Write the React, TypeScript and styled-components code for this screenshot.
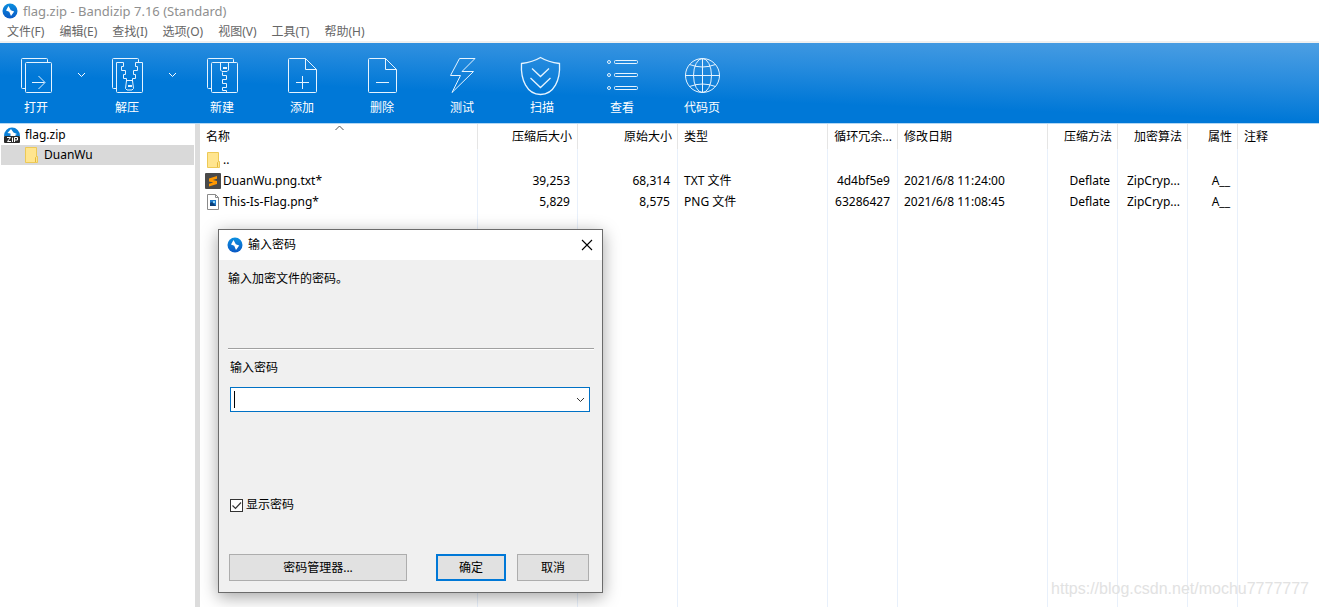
import React from "react";
import styled, { createGlobalStyle } from "styled-components";

const GlobalStyle = createGlobalStyle`
  *, *::before, *::after { box-sizing: border-box; }
  body {
    margin: 0;
    background: #fff;
    color: #000;
    font: 12px/16px "Noto Sans", "Noto Sans CJK SC", sans-serif;
  }
  button, input { font: inherit; color: inherit; }
`;

const Window = styled.div`
  position: relative;
  display: flex;
  flex-direction: column;
  height: 100vh;
  overflow: hidden;
`;

const TitleBar = styled.header`
  display: flex;
  align-items: center;
  gap: 5px;
  height: 22px;
  padding-left: 2px;
  color: #8f8f8f;
`;

const Title = styled.h1`
  margin: 0;
  font-size: 13px;
  font-weight: 400;
`;

const MenuBar = styled.nav`
  display: flex;
  gap: 15px;
  height: 21px;
  padding-left: 7px;
  border-bottom: 2px solid #f0f0f0;
`;

const MenuButton = styled.button`
  padding: 0;
  border: 0;
  background: none;
  color: #666;
  line-height: 20px;
  white-space: nowrap;
`;

const Toolbar = styled.div`
  display: flex;
  height: 81px;
  flex: none;
  border-bottom: 1px solid #b3d7f3;
  background: linear-gradient(182deg, #4d9fe3 0%, #288cde 32%, #0078d7 62%);
`;

const ToolButton = styled.button<{ $width: number }>`
  display: flex;
  flex-direction: column;
  align-items: center;
  gap: 4px;
  width: ${(p) => p.$width}px;
  padding: 13px 0 0;
  border: 0;
  background: none;
  color: #fff;
`;

const ToolIcon = styled.svg`
  width: 40px;
  height: 40px;
  overflow: visible;
  fill: none;
  stroke: #e6f4ff;
`;

const DropButton = styled.button`
  width: 19px;
  padding: 0 0 16px;
  border: 0;
  background: none;
  svg { display: block; margin: auto; }
`;

const Main = styled.main`
  display: flex;
  flex: 1;
  min-height: 0;
`;

const TreePane = styled.aside`
  width: 200px;
  flex: none;
  border-right: 5px solid #dcdcdc;
`;

const Tree = styled.ul`
  margin: 0;
  padding: 1px 1px 0;
  list-style: none;
`;

const TreeRow = styled.li<{ $depth: number; $selected?: boolean }>`
  display: flex;
  align-items: center;
  gap: 5px;
  height: 20px;
  padding-left: ${(p) => 3 + p.$depth * 19}px;
  background: ${(p) => (p.$selected ? "#d9d9d9" : "transparent")};
`;

const ListPane = styled.section`
  flex: 1;
  min-width: 0;
  overflow: hidden;
`;

const FileTable = styled.table`
  width: 100%;
  height: 100%;
  table-layout: fixed;
  border-collapse: separate;
  border-spacing: 0;
`;

const HeadCell = styled.th<{ $right?: boolean }>`
  position: relative;
  height: 25px;
  padding: 0 5px 0 6px;
  border-right: 1px solid #e5e5e5;
  font-weight: 400;
  text-align: ${(p) => (p.$right ? "right" : "left")};
  white-space: nowrap;
  &:last-child { border-right: 0; }
`;

const SortMark = styled.svg`
  position: absolute;
  top: 1px;
  left: 50%;
  margin-left: -4px;
`;

const Cell = styled.td<{ $right?: boolean }>`
  height: 21px;
  padding: 0 7px 0 6px;
  border-right: 1px solid #e8f0fb;
  text-align: ${(p) => (p.$right ? "right" : "left")};
  white-space: nowrap;
  &:last-child { border-right: 0; }
`;

const FillCell = styled(Cell)`
  height: auto;
`;

const FileName = styled.span`
  display: flex;
  align-items: center;
  gap: 2px;
  margin-left: -1px;
`;

const Dialog = styled.section`
  position: absolute;
  left: 218px;
  top: 229px;
  width: 385px;
  border: 1px solid #6b6b6b;
  background: #f0f0f0;
  box-shadow: 0 4px 16px rgba(0, 0, 0, 0.36);
`;

const DialogTitle = styled.header`
  display: flex;
  align-items: center;
  gap: 5px;
  height: 30px;
  padding: 0 9px 1px 8px;
  background: #fff;
`;

const DialogHeading = styled.h2`
  flex: 1;
  margin: 0;
  font-size: 12px;
  font-weight: 400;
`;

const CloseButton = styled.button`
  width: 12px;
  height: 12px;
  padding: 0;
  border: 0;
  background: none;
  svg { display: block; }
`;

const Message = styled.p`
  height: 78px;
  margin: 11px 8px 0 9px;
  border-bottom: 1px solid #a0a0a0;
  box-shadow: 0 1px 0 #fff;
`;

const Form = styled.form`
  display: flex;
  flex-direction: column;
  padding: 11px 12px 11px 11px;
`;

const ComboBox = styled.div`
  display: flex;
  align-items: center;
  height: 25px;
  margin: 11px 0 85px;
  padding: 0 4px 0 3px;
  border: 1px solid #0071c5;
  background: #fff;
`;

const Caret = styled.span`
  width: 1px;
  height: 17px;
  background: #000;
`;

const PasswordInput = styled.input`
  flex: 1;
  min-width: 0;
  padding: 0;
  border: 0;
  outline: 0;
  background: none;
`;

const ComboArrow = styled.button`
  padding: 0;
  border: 0;
  background: none;
  svg { display: block; }
`;

const CheckRow = styled.label`
  display: flex;
  align-items: center;
  gap: 3px;
`;

const CheckMark = styled.span`
  display: grid;
  input, svg { grid-area: 1 / 1; }
  svg { pointer-events: none; }
`;

const CheckInput = styled.input`
  appearance: none;
  width: 13px;
  height: 13px;
  margin: 0;
  border: 1px solid #333;
  background: #fff;
  &:not(:checked) + svg { visibility: hidden; }
`;

const ButtonRow = styled.div`
  display: flex;
  margin: 41px 1px 0 -1px;
`;

const DialogButton = styled.button<{ $width: number; $primary?: boolean }>`
  width: ${(p) => p.$width}px;
  height: 27px;
  padding: 0;
  border: ${(p) => (p.$primary ? "2px solid #0078d7" : "1px solid #adadad")};
  background: #e1e1e1;
  &:nth-child(2) { margin: 0 11px 0 auto; }
`;

const Watermark = styled.span`
  position: absolute;
  right: 10px;
  bottom: 9px;
  color: #e2e2e2;
  font: 16px/18px "Liberation Sans", sans-serif;
  pointer-events: none;
`;

const AppLogo = () => (
  <svg width="16" height="16" viewBox="0 0 16 16">
    <defs>
      <linearGradient id="logo" x1="0" y1="0" x2="0" y2="1">
        <stop offset="0" stopColor="#0b8fe0" />
        <stop offset="1" stopColor="#0a58c4" />
      </linearGradient>
    </defs>
    <circle cx="8" cy="8" r="7.5" fill="url(#logo)" />
    <path d="M6.500 3 4 7.500 7.200 8.800 9 13 12.200 8.600 8.800 7.200z" fill="#fff" />
  </svg>
);

const ZipIcon = () => (
  <svg width="16" height="16" viewBox="0 0 16 16">
    <path d="M0 9A8 8.500 0 0 1 16 9z" fill="#0a80d8" />
    <path d="M7 2 3.500 6 6.500 6.500 6.500 9H12L11 8 13 7 9.500 5.500z" fill="#fff" />
    <rect y="9" width="16" height="7" rx="1" fill="#2b2b2b" />
    <path d="M3 10.500H6.500L3.500 14.500H7M8.500 10.500V15M10.500 15V10.500H13.500V13H11" fill="none" stroke="#fff" />
  </svg>
);

const FolderIcon = () => (
  <svg width="16" height="16" viewBox="-1 0 16 16">
    <path d="M1.500.5h11v9h1v6h-12z" fill="#ffe58f" stroke="#edc956" />
    <path d="M11.500 15V10.500L12.500 9.500" fill="none" stroke="#e3b93e" />
  </svg>
);

const SublimeIcon = () => (
  <svg width="16" height="16" viewBox="0 0 16 16">
    <rect width="16" height="16" rx="1" fill="#4a4a4a" />
    <path d="M12 3 4 5.400v3l4.200 1.200L4 10.800V13.500l8-2.400v-3L7.800 6.900 12 5.700z" fill="#ff9800" />
  </svg>
);

const ImageIcon = () => (
  <svg width="16" height="16" viewBox="0 0 16 16">
    <path d="M2.500.5h8l3 3v12h-11z" fill="#fff" stroke="#8a8a8a" />
    <path d="M10.500.5v3h3" fill="none" stroke="#8a8a8a" />
    <rect x="5" y="6" width="6" height="6" fill="#1c78c9" />
    <path d="M5 12V9l2-1 4 4z" fill="#0b3f78" />
    <rect x="8" y="7" width="2" height="2" fill="#8fd6f5" />
  </svg>
);

const Chevron = ({ color }: { color: string }) => (
  <svg width="9" height="6" viewBox="0 0 9 6">
    <path d="M1 1l3.500 3.500L8 1" fill="none" stroke={color} />
  </svg>
);

const stackedSheet = "M9.500 32.500h-3q-1 0-1-1v-28q0-1 1-1h24q1 0 1 1v3";

const icons: Record<string, React.ReactNode> = {
  open: (
    <>
      <path d={stackedSheet} />
      <rect x="9.500" y="6.500" width="26" height="30" rx="1" />
      <path d="M16 26.500h12.500M22.500 20l6.500 6.500-6.500 6.500" />
    </>
  ),
  extract: (
    <>
      <path d={stackedSheet} />
      <path d="M16.500 6.500H9.500v29q0 1 1 1h24q1 0 1-1v-29H28.500v4h2v4h-4v4h2v4h-3v3M16.500 6.500v4h-2v4h4v4h-2v4h3v3" />
      <path d="M19.500 24.500h6l1 8-1.500 1.500h-5l-1.500-1.500z" />
      <rect x="21.500" y="29.500" width="3" height="1" />
    </>
  ),
  create: (
    <>
      <path d={stackedSheet} />
      <rect x="9.500" y="6.500" width="26" height="30" rx="1" />
      <path d="M18.500 6.500v7.500l1.500 1.500h5l1.500-1.500V6.500M20.500 16.500v3h4v4h-4v4h4v4h-4v3h4v2" />
      <rect x="21.500" y="11.500" width="3" height="1" />
    </>
  ),
  add: (
    <>
      <path d="M23.500 2.500h-16q-1 0-1 1v32q0 1 1 1h26q1 0 1-1v-22zv11h11" />
      <path d="M14 26.500h13M20.500 20v13" />
    </>
  ),
  remove: (
    <>
      <path d="M23.500 2.500h-16q-1 0-1 1v32q0 1 1 1h26q1 0 1-1v-22zv11h11" />
      <path d="M14 26.500h13" />
    </>
  ),
  test: <path d="M17.500 2.500H33L20 15.500h11.500L10 36.500l8.500-17h-10z" />,
  scan: (
    <g strokeWidth="1.300">
      <path d="M18.500 1.500Q26 6 37.500 7.500C38.500 24 32 38.500 18.500 38.500S-1.500 24-.5 7.500Q11 6 18.500 1.500z" />
      <path d="M10 12.500l8.500 8 8.500-8M8.500 22l10 9.500 10-9.500" />
    </g>
  ),
  view: (
    <>
      {[6, 19, 32].map((y) => (
        <g key={y}>
          <circle cx="7" cy={y} r="1.500" />
          <rect x="12.500" y={y - 1.5} width="23" height="3" rx="1" />
        </g>
      ))}
    </>
  ),
  codepage: (
    <>
      <circle cx="20.500" cy="19.500" r="17" />
      <ellipse cx="20.500" cy="19.500" rx="9" ry="17" />
      <path d="M20.500 2v35M3 19.500h35M7.500 8.500q13 5 26 0M7.500 30.500q13-5 26 0" />
    </>
  ),
};

const tools = [
  { icon: "open", label: "打开", width: 72, drop: true },
  { icon: "extract", label: "解压", width: 72, drop: true },
  { icon: "create", label: "新建", width: 80 },
  { icon: "add", label: "添加", width: 80 },
  { icon: "remove", label: "删除", width: 80 },
  { icon: "test", label: "测试", width: 80 },
  { icon: "scan", label: "扫描", width: 80 },
  { icon: "view", label: "查看", width: 80 },
  { icon: "codepage", label: "代码页", width: 80 },
];

const menus = ["文件(F)", "编辑(E)", "查找(I)", "选项(O)", "视图(V)", "工具(T)", "帮助(H)"];

const columns: { label: string; width?: number; right?: boolean }[] = [
  { label: "名称", width: 278 },
  { label: "压缩后大小", width: 100, right: true },
  { label: "原始大小", width: 100, right: true },
  { label: "类型", width: 150 },
  { label: "循环冗余...", width: 70, right: true },
  { label: "修改日期", width: 150 },
  { label: "压缩方法", width: 70, right: true },
  { label: "加密算法", width: 70, right: true },
  { label: "属性", width: 50, right: true },
  { label: "注释" },
];

const files = [
  { icon: <FolderIcon />, cells: ["..", "", "", "", "", "", "", "", "", ""] },
  {
    icon: <SublimeIcon />,
    cells: ["DuanWu.png.txt*", "39,253", "68,314", "TXT 文件", "4d4bf5e9", "2021/6/8 11:24:00", "Deflate", "ZipCryp...", "A__", ""],
  },
  {
    icon: <ImageIcon />,
    cells: ["This-Is-Flag.png*", "5,829", "8,575", "PNG 文件", "63286427", "2021/6/8 11:08:45", "Deflate", "ZipCryp...", "A__", ""],
  },
];

export default function App() {
  return (
    <Window>
      <GlobalStyle />
      <TitleBar>
        <AppLogo />
        <Title>flag.zip - Bandizip 7.16 (Standard)</Title>
      </TitleBar>
      <MenuBar>
        {menus.map((m) => (
          <MenuButton key={m} type="button">{m}</MenuButton>
        ))}
      </MenuBar>
      <Toolbar>
        {tools.map((t) => (
          <React.Fragment key={t.icon}>
            <ToolButton type="button" $width={t.width}>
              <ToolIcon viewBox="0 0 40 40">{icons[t.icon]}</ToolIcon>
              {t.label}
            </ToolButton>
            {t.drop && (
              <DropButton type="button" aria-label={t.label}>
                <Chevron color="#fff" />
              </DropButton>
            )}
          </React.Fragment>
        ))}
      </Toolbar>
      <Main>
        <TreePane>
          <Tree>
            <TreeRow $depth={0}><ZipIcon />flag.zip</TreeRow>
            <TreeRow $depth={1} $selected><FolderIcon />DuanWu</TreeRow>
          </Tree>
        </TreePane>
        <ListPane>
          <FileTable>
            <colgroup>
              {columns.map((c) => (
                <col key={c.label} width={c.width} />
              ))}
            </colgroup>
            <thead>
              <tr>
                {columns.map((c, i) => (
                  <HeadCell key={c.label} $right={c.right}>
                    {c.label}
                    {i === 0 && (
                      <SortMark width="9" height="6" viewBox="0 0 9 6">
                        <path d="M.5 5l4-4 4 4" fill="none" stroke="#555" />
                      </SortMark>
                    )}
                  </HeadCell>
                ))}
              </tr>
            </thead>
            <tbody>
              {files.map((f) => (
                <tr key={f.cells[0]}>
                  {f.cells.map((text, i) => (
                    <Cell key={columns[i].label} $right={columns[i].right}>
                      {i === 0 ? <FileName>{f.icon}{text}</FileName> : text}
                    </Cell>
                  ))}
                </tr>
              ))}
              <tr>
                {columns.map((c) => (
                  <FillCell key={c.label} />
                ))}
              </tr>
            </tbody>
          </FileTable>
        </ListPane>
      </Main>
      <Dialog role="dialog" aria-labelledby="dialog-title">
        <DialogTitle>
          <AppLogo />
          <DialogHeading id="dialog-title">输入密码</DialogHeading>
          <CloseButton type="button" aria-label="关闭">
            <svg width="12" height="12" viewBox="0 0 12 12">
              <path d="M1 1l10 10M11 1L1 11" stroke="#000" strokeWidth="1.100" />
            </svg>
          </CloseButton>
        </DialogTitle>
        <Message>输入加密文件的密码。</Message>
        <Form>
          <label htmlFor="password">输入密码</label>
          <ComboBox>
            <Caret />
            <PasswordInput id="password" type="text" autoComplete="off" />
            <ComboArrow type="button" aria-label="输入密码">
              <Chevron color="#333" />
            </ComboArrow>
          </ComboBox>
          <CheckRow>
            <CheckMark>
              <CheckInput type="checkbox" defaultChecked />
              <svg width="13" height="13" viewBox="0 0 13 13">
                <path d="M2.500 6.500l3 3 5.500-6" fill="none" stroke="#333" strokeWidth="1.200" />
              </svg>
            </CheckMark>
            显示密码
          </CheckRow>
          <ButtonRow>
            <DialogButton type="button" $width={178}>密码管理器...</DialogButton>
            <DialogButton type="button" $width={70} $primary>确定</DialogButton>
            <DialogButton type="button" $width={72}>取消</DialogButton>
          </ButtonRow>
        </Form>
      </Dialog>
      <Watermark>https://blog.csdn.net/mochu7777777</Watermark>
    </Window>
  );
}
